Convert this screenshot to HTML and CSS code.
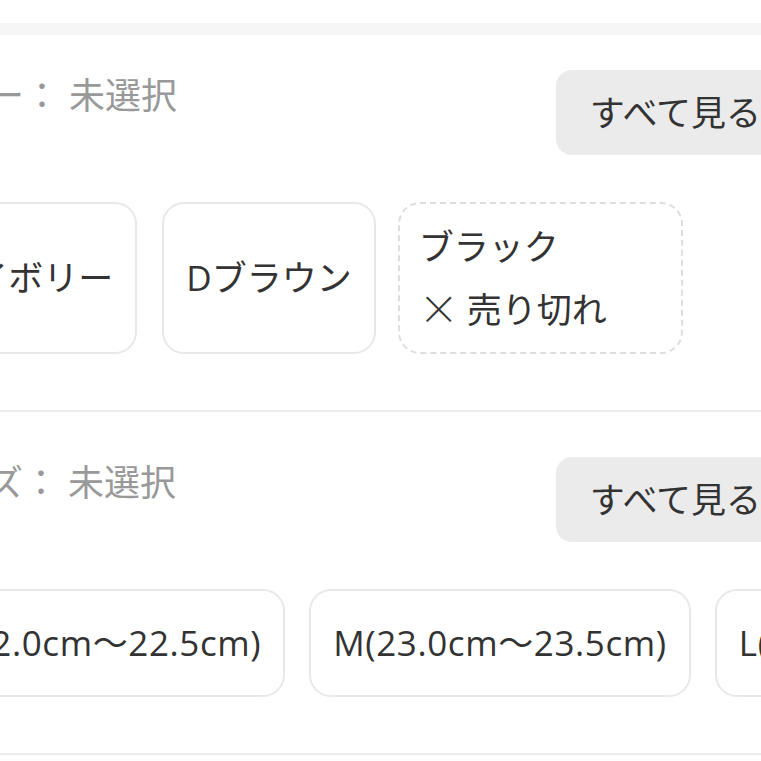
FILE: index.html
```html
<!DOCTYPE html>
<html lang="ja">
<head>
<meta charset="utf-8">
<link rel="stylesheet" href="styles.css">
</head>
<body>
<div class="topband"></div>
<div class="page">
  <section class="section">
    <div class="header">
      <div class="label">カラー：<span class="value">未選択</span></div>
      <button class="all">すべて見る</button>
    </div>
    <div class="chips colors">
      <div class="chip">アイボリー</div>
      <div class="chip">Dブラウン</div>
      <div class="chip soldout">
        <div class="line">ブラック</div>
        <div class="line"><span class="x">×</span>売り切れ</div>
      </div>
    </div>
  </section>
  <section class="section">
    <div class="header">
      <div class="label">サイズ：<span class="value">未選択</span></div>
      <button class="all">すべて見る</button>
    </div>
    <div class="chips sizes">
      <div class="chip">S(22.0cm～22.5cm)</div>
      <div class="chip">M(23.0cm～23.5cm)</div>
      <div class="chip">L(24.0cm～24.5cm)</div>
    </div>
  </section>
</div>
</body>
</html>
```
FILE: styles.css
```css
html, body {
  margin: 0;
  padding: 0;
  background: #ffffff;
  overflow: hidden;
  width: 761px;
  height: 761px;
}
body {
  font-family: "Open Sans", "Noto Sans CJK JP", sans-serif;
  font-size: 35px;
  color: #333333;
}
.topband {
  height: 12px;
  margin-top: 23px;
  background: #f6f6f6;
}
.page {
  width: 1000px;
  margin-left: -84px;
}
.section {
  padding: 35px 0 56px 0;
  border-bottom: 2px solid #ececec;
}
.section + .section {
  padding-top: 45px;
}
.header {
  display: flex;
  justify-content: space-between;
  align-items: flex-start;
  padding-right: 120px;
}
.label {
  color: #999999;
  font-size: 36px;
  line-height: 51px;
}
.value {
  margin-left: 9px;
}
.all {
  font-family: inherit;
  font-size: 35px;
  color: #333333;
  background: #ebebeb;
  border: none;
  border-radius: 16px;
  height: 85px;
  padding: 0 35px 0 34px;
  line-height: 51px;
}
.chips {
  display: flex;
  gap: 24px;
  margin-top: 47px;
}
.chips.colors {
  gap: 25px;
}
.chips.colors .soldout {
  margin-left: -3px;
}
.chips.sizes .chip {
  letter-spacing: 0.6px;
}
.chip {
  flex: none;
  display: flex;
  flex-direction: column;
  justify-content: center;
  border: 2px solid #e8e8e8;
  border-radius: 22px;
  padding: 26px 22px;
  line-height: 52px;
  white-space: nowrap;
}
.chip.soldout {
  border: 2px dashed #dddddd;
  padding: 21px 19px;
  gap: 18px;
  width: 243px;
}
.chip.soldout .line {
  height: 44px;
  line-height: 44px;
}
.x {
  font-family: "Noto Sans CJK JP", sans-serif;
  font-size: 40px;
  font-weight: 300;
  line-height: 1;
  margin-right: 8px;
  vertical-align: -1px;
}
```
